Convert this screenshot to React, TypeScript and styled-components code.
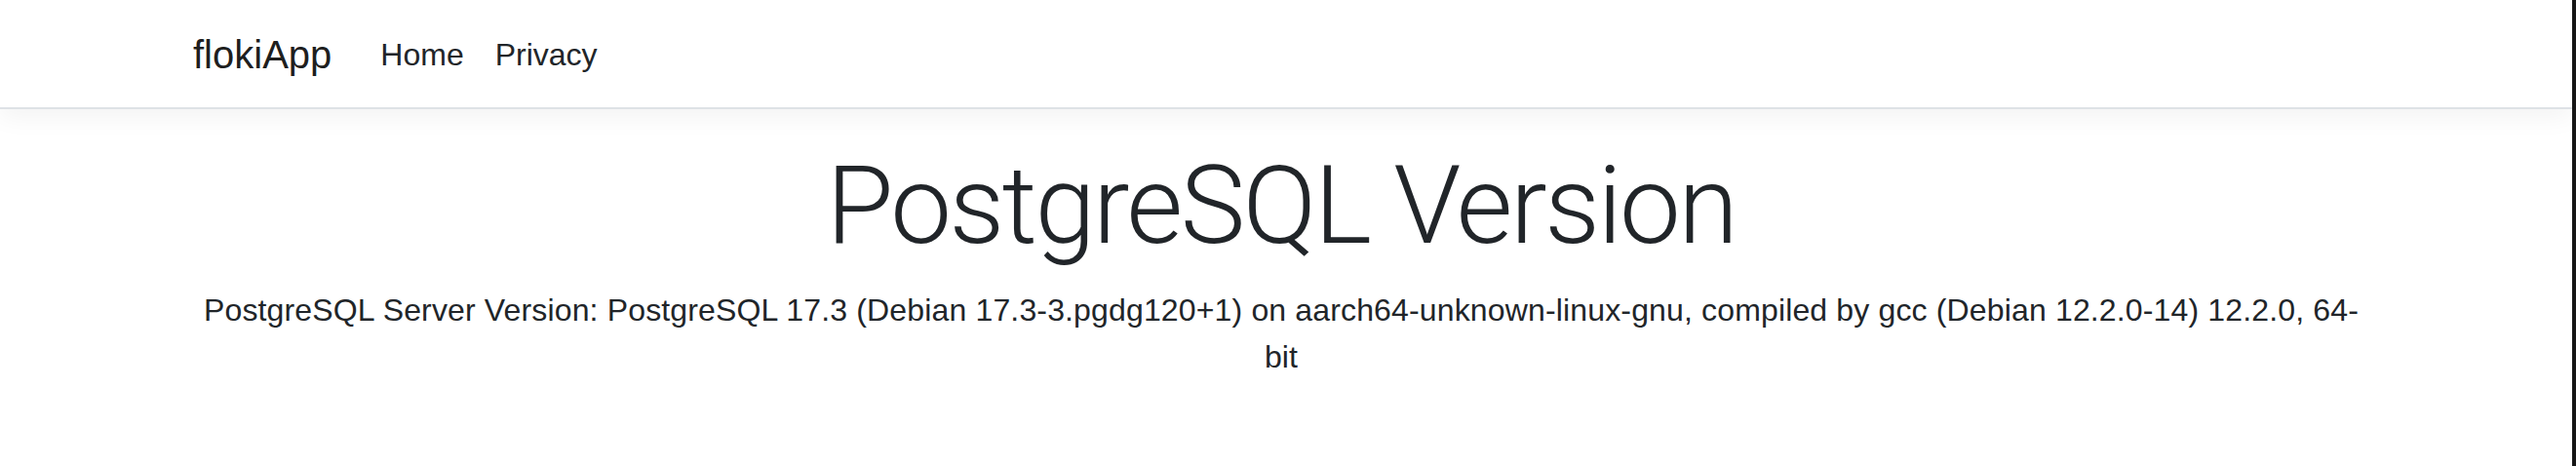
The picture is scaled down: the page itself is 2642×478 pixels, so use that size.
import React from "react";
import styled, { createGlobalStyle } from "styled-components";

const GlobalStyle = createGlobalStyle`
  html, body {
    margin: 0;
    padding: 0;
    background: #ffffff;
  }
  body {
    font-family: "Liberation Sans", Arial, sans-serif;
    color: #212529;
    -webkit-font-smoothing: antialiased;
  }
  * { box-sizing: border-box; }
`;

const Shell = styled.div`
  display: flex;
  min-height: 100vh;
`;

const Page = styled.div`
  flex: 1;
  min-width: 0;
  background: #ffffff;
`;

const Edge = styled.div`
  width: 4px;
  flex: none;
  background: #161616;
`;

const Navbar = styled.header`
  background: #ffffff;
  border-bottom: 2px solid #dee2e6;
  box-shadow: 0 8px 24px rgba(0, 0, 0, 0.05);
  margin-bottom: 32px;
  padding: 16px 10px 14px 0;
`;

const Container = styled.div`
  max-width: 2280px;
  margin: 0 auto;
  padding: 0 24px;
`;

const NavRow = styled(Container)`
  display: flex;
  align-items: center;
`;

const Brand = styled.a`
  font-size: 40px;
  line-height: 60px;
  padding: 10px 0;
  margin-right: 34px;
  color: rgba(0, 0, 0, 0.9);
  text-decoration: none;
  white-space: nowrap;
`;

const NavList = styled.ul`
  display: flex;
  list-style: none;
  margin: 0;
  padding: 0;
`;

const NavLink = styled.a`
  display: block;
  padding: 16px;
  font-size: 32px;
  line-height: 48px;
  color: #212529;
  text-decoration: none;
`;

const Main = styled.main`
  padding: 0 10px 32px 0;
`;

const Center = styled.div`
  text-align: center;
`;

const Title = styled.h1`
  margin: 0 0 16px;
  font-family: Roboto, "Liberation Sans", Arial, sans-serif;
  font-weight: 300;
  font-size: 112px;
  line-height: 1.2;
  letter-spacing: -2.5px;
  color: #212529;
`;

const Text = styled.p`
  margin: 0 0 32px;
  font-size: 32px;
  line-height: 48px;
  letter-spacing: 0.15px;
  color: #212529;
`;

export default function App() {
  return (
    <>
      <GlobalStyle />
      <Shell>
        <Page>
          <Navbar>
            <NavRow>
              <Brand href="#">flokiApp</Brand>
              <NavList>
                <li>
                  <NavLink href="#">Home</NavLink>
                </li>
                <li>
                  <NavLink href="#">Privacy</NavLink>
                </li>
              </NavList>
            </NavRow>
          </Navbar>
          <Main>
            <Container>
              <Center>
                <Title>PostgreSQL Version</Title>
                <Text>
                  PostgreSQL Server Version: PostgreSQL 17.3 (Debian 17.3-3.pgdg120+1) on
                  aarch64-unknown-linux-gnu, compiled by gcc (Debian 12.2.0-14) 12.2.0, 64-bit
                </Text>
              </Center>
            </Container>
          </Main>
        </Page>
        <Edge />
      </Shell>
    </>
  );
}
